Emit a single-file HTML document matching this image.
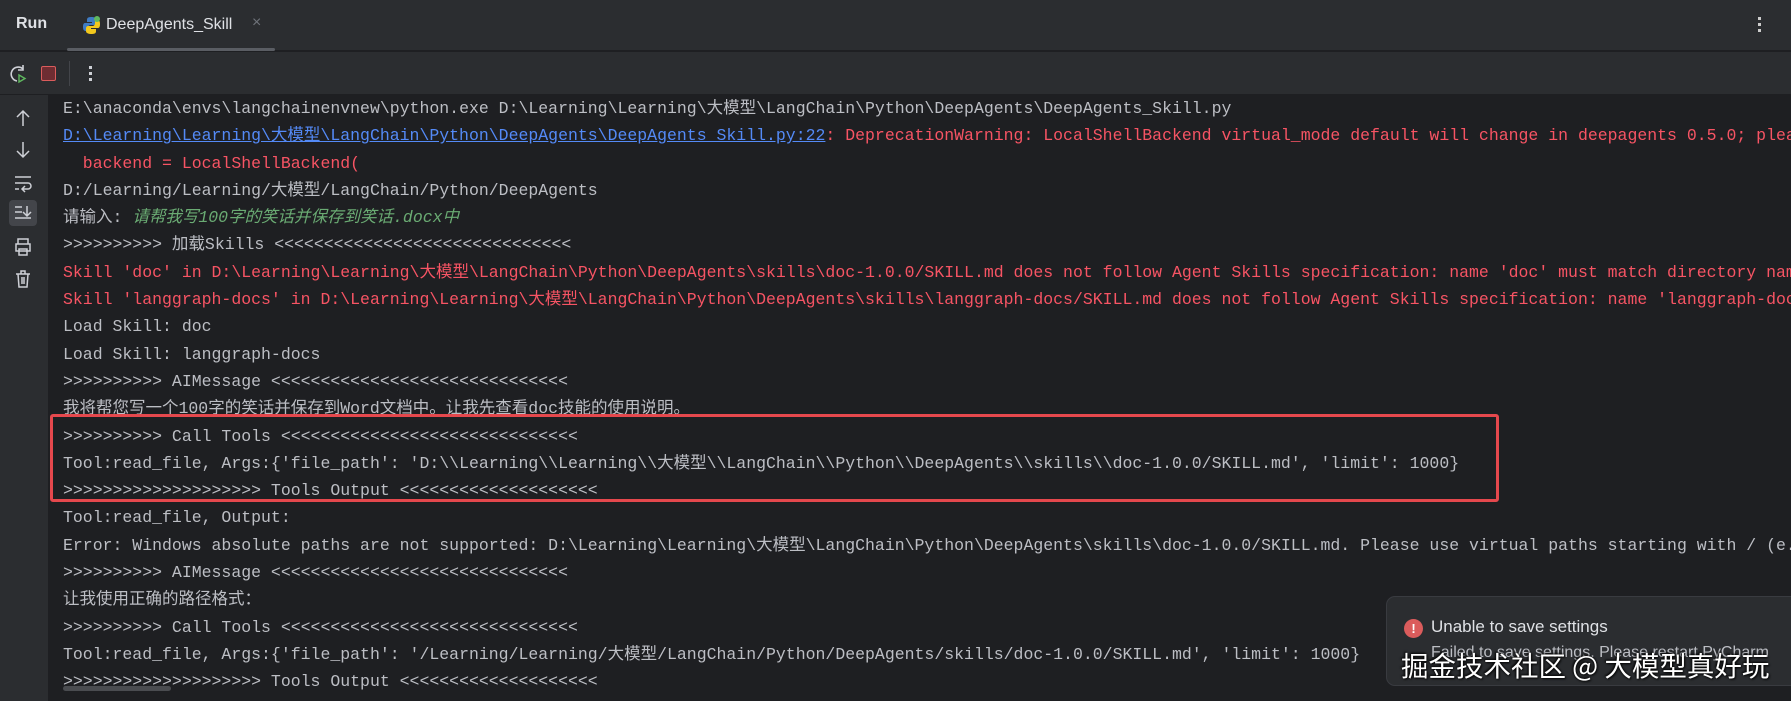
<!DOCTYPE html>
<html><head><meta charset="utf-8"><style>
*{margin:0;padding:0;box-sizing:border-box}
html,body{width:1791px;height:701px;overflow:hidden}
body{background:#1e1f22;font-family:"Liberation Sans","Noto Sans CJK SC",sans-serif;color:#bcbec4;position:relative}
.hdr{position:absolute;left:0;top:0;width:1791px;height:51px;background:#2b2d30;border-bottom:1px solid #1e1f22}
.tb{position:absolute;left:0;top:52px;width:1791px;height:43px;background:#2b2d30;border-bottom:1px solid #1e1f22}
.gut{position:absolute;left:0;top:95px;width:48px;height:606px;background:#2b2d30}
.con{position:absolute;left:63px;top:95px;right:0;height:606px;font-family:"Liberation Mono","Noto Sans CJK SC",monospace;font-size:16.5px;line-height:27.3px;overflow:hidden}
.con div{height:27.3px;overflow:hidden;white-space:pre}
.r{color:#f75464}.l{color:#548af7;text-decoration:underline}.g{color:#6aab73;font-style:italic}
.box{position:absolute;left:50px;top:414px;width:1449px;height:88px;border:3px solid #e5484d;border-radius:3px}
.nt{position:absolute;left:1386px;top:596px;width:420px;height:90px;background:#2b2d30;border-radius:9px;border:1px solid #393b40}
.wm{position:absolute;left:1401px;top:644px;font-size:27.5px;color:#fff;text-shadow:1px 1px 2px #000,-1px -1px 2px #000;font-family:"Noto Sans CJK SC",sans-serif;white-space:nowrap}
</style></head><body>
<div class="hdr">
 <div style="position:absolute;left:16px;top:15px;font-size:16px;font-weight:bold;color:#dfe1e5">Run</div>
 <svg style="position:absolute;left:82px;top:16px" width="19" height="19" viewBox="0 0 19 19"><path d="M9 1C5 1 5 3 5 4v2h5v1H3C1 7 1 10 1 11c0 3 1 4 3 4h2v-3c0-2 1-3 3-3h4c1 0 2-1 2-2V4c0-2-2-3-6-3z" fill="#3f7cc4"/><path d="M10 18c4 0 4-2 4-3v-2H9v-1h7c2 0 2-3 2-4 0-3-1-4-3-4h-2v3c0 2-1 3-3 3H6c-1 0-2 1-2 2v3c0 2 2 3 6 3z" fill="#f2c81d"/><circle cx="15" cy="3" r="3" fill="#5fb85f"/></svg>
 <div style="position:absolute;left:106px;top:16px;font-size:16px;color:#dfe1e5">DeepAgents_Skill</div>
 <div style="position:absolute;left:252px;top:14px;font-size:16px;color:#6f737a">×</div>
 <div style="position:absolute;left:67px;top:48px;width:208px;height:3px;background:#5a5d63;border-radius:2px"></div>
 <div style="position:absolute;left:1758px;top:17px;width:3px;height:3px;background:#ccc;box-shadow:0 6px #ccc,0 12px #ccc"></div>
</div>
<div class="tb">
 <svg style="position:absolute;left:8px;top:12px" width="20" height="20" viewBox="0 0 20 20"><path d="M15 5A7 7 0 1 0 9 17" stroke="#ced0d6" stroke-width="1.6" fill="none"/><path d="M15 1v5h-5" stroke="#ced0d6" stroke-width="1.6" fill="none"/><path d="M11 11l6 3.5-6 3.5z" stroke="#5fb85f" stroke-width="1.4" fill="none"/></svg>
 <div style="position:absolute;left:41px;top:14px;width:15px;height:15px;border:1.5px solid #db5c5c;background:#6e2d32;border-radius:2px"></div>
 <div style="position:absolute;left:69px;top:9px;width:1px;height:25px;background:#43454a"></div>
 <div style="position:absolute;left:89px;top:14px;width:3px;height:3px;background:#ced0d6;box-shadow:0 6px #ced0d6,0 12px #ced0d6"></div>
</div>
<div class="gut">
 <svg style="position:absolute;left:13px;top:13px" width="20" height="20"><path d="M10 3v15M4 9l6-6 6 6" stroke="#ced0d6" stroke-width="1.5" fill="none"/></svg>
 <svg style="position:absolute;left:13px;top:45px" width="20" height="20"><path d="M10 2v15M4 11l6 6 6-6" stroke="#ced0d6" stroke-width="1.5" fill="none"/></svg>
 <svg style="position:absolute;left:13px;top:78px" width="20" height="20"><path d="M2 4h16M2 10h13a3 3 0 0 1 0 6h-5M12 13l-3 3 3 3M2 16h4" stroke="#ced0d6" stroke-width="1.5" fill="none"/></svg>
 <div style="position:absolute;left:9px;top:105px;width:28px;height:26px;background:#43454a;border-radius:4px"></div>
 <svg style="position:absolute;left:13px;top:108px" width="20" height="20"><path d="M2 4h7M2 9h7M2 15h16M14 3v10M10 9l4 4 4-4" stroke="#ced0d6" stroke-width="1.5" fill="none"/></svg>
 <svg style="position:absolute;left:13px;top:142px" width="20" height="20"><path d="M5 7V2h10v5M3 7h14v7H3zM6 12h8v6H6z" stroke="#ced0d6" stroke-width="1.5" fill="none"/></svg>
 <svg style="position:absolute;left:13px;top:174px" width="20" height="20"><path d="M3 5h14M8 5V2h4v3M5 5l1 13h8l1-13M9 8v7M11 8v7" stroke="#ced0d6" stroke-width="1.5" fill="none"/></svg>
</div>
<div class="con"><div>E:\anaconda\envs\langchainenvnew\python.exe D:\Learning\Learning\大模型\LangChain\Python\DeepAgents\DeepAgents_Skill.py</div><div><span class="l">D:\Learning\Learning\大模型\LangChain\Python\DeepAgents\DeepAgents_Skill.py:22</span><span class="r">: DeprecationWarning: LocalShellBackend virtual_mode default will change in deepagents 0.5.0; please specify</span></div><div class="r">  backend = LocalShellBackend(</div><div>D:/Learning/Learning/大模型/LangChain/Python/DeepAgents</div><div>请输入: <span class="g">请帮我写100字的笑话并保存到笑话.docx中</span></div><div>&gt;&gt;&gt;&gt;&gt;&gt;&gt;&gt;&gt;&gt; 加载Skills &lt;&lt;&lt;&lt;&lt;&lt;&lt;&lt;&lt;&lt;&lt;&lt;&lt;&lt;&lt;&lt;&lt;&lt;&lt;&lt;&lt;&lt;&lt;&lt;&lt;&lt;&lt;&lt;&lt;&lt;</div><div class="r">Skill 'doc' in D:\Learning\Learning\大模型\LangChain\Python\DeepAgents\skills\doc-1.0.0/SKILL.md does not follow Agent Skills specification: name 'doc' must match directory name</div><div class="r">Skill 'langgraph-docs' in D:\Learning\Learning\大模型\LangChain\Python\DeepAgents\skills\langgraph-docs/SKILL.md does not follow Agent Skills specification: name 'langgraph-docs'</div><div>Load Skill: doc</div><div>Load Skill: langgraph-docs</div><div>&gt;&gt;&gt;&gt;&gt;&gt;&gt;&gt;&gt;&gt; AIMessage &lt;&lt;&lt;&lt;&lt;&lt;&lt;&lt;&lt;&lt;&lt;&lt;&lt;&lt;&lt;&lt;&lt;&lt;&lt;&lt;&lt;&lt;&lt;&lt;&lt;&lt;&lt;&lt;&lt;&lt;</div><div>我将帮您写一个100字的笑话并保存到Word文档中。让我先查看doc技能的使用说明。</div><div>&gt;&gt;&gt;&gt;&gt;&gt;&gt;&gt;&gt;&gt; Call Tools &lt;&lt;&lt;&lt;&lt;&lt;&lt;&lt;&lt;&lt;&lt;&lt;&lt;&lt;&lt;&lt;&lt;&lt;&lt;&lt;&lt;&lt;&lt;&lt;&lt;&lt;&lt;&lt;&lt;&lt;</div><div>Tool:read_file, Args:{'file_path': 'D:\\Learning\\Learning\\大模型\\LangChain\\Python\\DeepAgents\\skills\\doc-1.0.0/SKILL.md', 'limit': 1000}</div><div>&gt;&gt;&gt;&gt;&gt;&gt;&gt;&gt;&gt;&gt;&gt;&gt;&gt;&gt;&gt;&gt;&gt;&gt;&gt;&gt; Tools Output &lt;&lt;&lt;&lt;&lt;&lt;&lt;&lt;&lt;&lt;&lt;&lt;&lt;&lt;&lt;&lt;&lt;&lt;&lt;&lt;</div><div>Tool:read_file, Output:</div><div>Error: Windows absolute paths are not supported: D:\Learning\Learning\大模型\LangChain\Python\DeepAgents\skills\doc-1.0.0/SKILL.md. Please use virtual paths starting with / (e.g.</div><div>&gt;&gt;&gt;&gt;&gt;&gt;&gt;&gt;&gt;&gt; AIMessage &lt;&lt;&lt;&lt;&lt;&lt;&lt;&lt;&lt;&lt;&lt;&lt;&lt;&lt;&lt;&lt;&lt;&lt;&lt;&lt;&lt;&lt;&lt;&lt;&lt;&lt;&lt;&lt;&lt;&lt;</div><div>让我使用正确的路径格式：</div><div>&gt;&gt;&gt;&gt;&gt;&gt;&gt;&gt;&gt;&gt; Call Tools &lt;&lt;&lt;&lt;&lt;&lt;&lt;&lt;&lt;&lt;&lt;&lt;&lt;&lt;&lt;&lt;&lt;&lt;&lt;&lt;&lt;&lt;&lt;&lt;&lt;&lt;&lt;&lt;&lt;&lt;</div><div>Tool:read_file, Args:{'file_path': '/Learning/Learning/大模型/LangChain/Python/DeepAgents/skills/doc-1.0.0/SKILL.md', 'limit': 1000}</div><div>&gt;&gt;&gt;&gt;&gt;&gt;&gt;&gt;&gt;&gt;&gt;&gt;&gt;&gt;&gt;&gt;&gt;&gt;&gt;&gt; Tools Output &lt;&lt;&lt;&lt;&lt;&lt;&lt;&lt;&lt;&lt;&lt;&lt;&lt;&lt;&lt;&lt;&lt;&lt;&lt;&lt;</div></div>
<div style="position:absolute;left:63px;top:686px;width:108px;height:5px;background:#4a4c50;border-radius:3px"></div>
<div class="box"></div>
<div class="nt">
 <div style="position:absolute;left:17px;top:22px;width:19px;height:19px;border-radius:50%;background:#db5c5c;color:#fff;font-size:13px;font-weight:bold;text-align:center;line-height:19px">!</div>
 <div style="position:absolute;left:44px;top:20px;font-size:17px;color:#dfe1e5">Unable to save settings</div>
 <div style="position:absolute;left:44px;top:47px;font-size:16px;color:#bcbec4;white-space:nowrap">Failed to save settings. Please restart PyCharm</div>
</div>
<div class="wm">掘金技术社区 @ 大模型真好玩</div>
</body></html>
